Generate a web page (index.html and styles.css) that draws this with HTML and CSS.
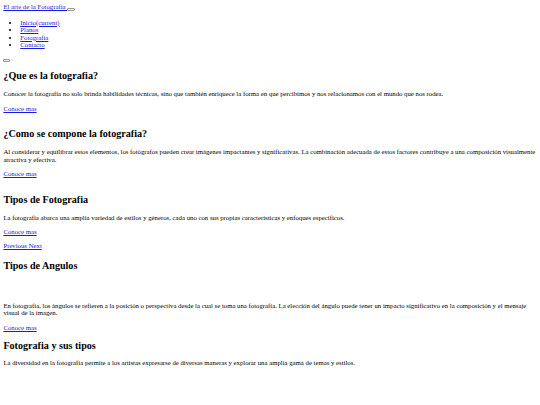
FILE: index.html
```html
<!DOCTYPE html>
<html lang="es">
<head>
<meta charset="utf-8">
<title>El arte de la Fotografia</title>
<link rel="stylesheet" href="styles.css">
</head>
<body class="page">
<nav class="navbar">
  <a class="brand" href="#"> El arte de la Fotografia </a><button class="toggler" type="button"></button>
  <ul class="nav-list">
    <li><a href="#">Inicio<span>(current)</span></a></li>
    <li><a href="#">Planos</a></li>
    <li><a href="#">Fotografia</a></li>
    <li><a href="#">Contacto</a></li>
  </ul>
</nav>
<div class="carousel-toggle"><button class="toggler toggler-block" type="button"></button></div>

<section class="block">
  <h2 class="title">¿Que es la fotografia?</h2>
  <p class="text">Conocer la fotografía no solo brinda habilidades técnicas, sino que también enriquece la forma en que percibimos y nos relacionamos con el mundo que nos rodea.</p>
  <p class="text"><a href="#">Conoce mas</a></p>
</section>

<section class="block spaced">
  <h2 class="title">¿Como se compone la fotografia?</h2>
  <p class="text">Al considerar y equilibrar estos elementos, los fotógrafos pueden crear imágenes impactantes y significativas. La combinación adecuada de estos factores contribuye a una composición visualmente atractiva y efectiva.</p>
  <p class="text"><a href="#">Conoce mas</a></p>
</section>

<section class="block spaced">
  <h2 class="title">Tipos de Fotografia</h2>
  <p class="text">La fotografía abarca una amplia variedad de estilos y géneros, cada uno con sus propias características y enfoques específicos.</p>
  <p class="text"><a href="#">Conoce mas</a></p>
  <p class="text"><a href="#">Previous </a><a href="#">Next</a></p>
</section>

<section class="block angles">
  <h2 class="title">Tipos de Angulos</h2>
  <div class="image-slot"></div>
  <p class="text">En fotografía, los ángulos se refieren a la posición o perspectiva desde la cual se toma una fotografía. La elección del ángulo puede tener un impacto significativo en la composición y el mensaje visual de la imagen.</p>
  <p class="text"><a href="#">Conoce mas</a></p>
</section>

<section class="block">
  <h2 class="title">Fotografia y sus tipos</h2>
  <p class="text">La diversidad en la fotografía permite a los artistas expresarse de diversas maneras y explorar una amplia gama de temas y estilos.</p>
</section>
</body>
</html>
```

FILE: styles.css
```css
.page {
  margin: 3.375px;
  font-family: "Liberation Serif", "Times New Roman", serif;
  font-size: 6.75px;
  line-height: 7.59px;
  color: #000;
  background: #fff;
}

.page a {
  color: #1a1ae6;
}

.toggler {
  display: inline-block;
  box-sizing: border-box;
  width: 7.5px;
  height: 2.6px;
  padding: 0;
  border: 0.8px solid #9a9a9a;
  border-radius: 1px;
  background: #efefef;
  vertical-align: -0.6px;
}

.toggler-block {
  display: block;
  width: 7px;
}

.nav-list {
  margin: 7.6px 0 6.75px;
  padding-left: 16.875px;
}

.carousel-toggle {
  padding-top: 3.8px;
}

.title {
  font-size: 10.125px;
  line-height: 11.39px;
  font-weight: bold;
  margin: 8.4px 0;
}

.text {
  margin: 6.75px 0;
}

.spaced {
  margin-top: 16.2px;
}

.angles {
  margin-top: 10px;
}

.image-slot {
  height: 15.3px;
}
```
